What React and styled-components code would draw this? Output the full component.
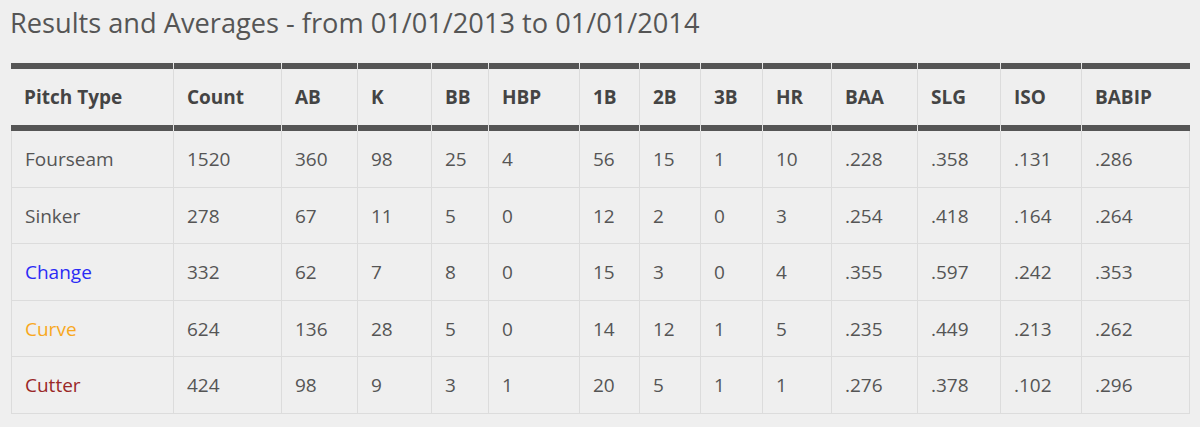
import styled, { createGlobalStyle } from 'styled-components';

const GlobalStyle = createGlobalStyle`
  html, body {
    margin: 0;
    background: #efefef;
  }
  body {
    font-family: "Open Sans", "Liberation Sans", sans-serif;
    color: #555;
  }
`;

const Page = styled.div`
  padding: 6px 10px 14px 11px;
`;

const Title = styled.h2`
  font-size: 27.2px;
  font-weight: 400;
  color: #555;
  margin: 0 0 23px -1px;
  line-height: 34px;
  white-space: nowrap;
`;

const Table = styled.table`
  table-layout: fixed;
  width: 1179px;
  border-collapse: separate;
  border-spacing: 0;
  font-size: 19px;
`;

const HeadCell = styled.th`
  height: 68px;
  padding: 0 0 0 13px;
  text-align: left;
  font-weight: 700;
  font-size: 19px;
  color: #444;
  border-top: 6px solid transparent;
  border-bottom: 6px solid transparent;
  border-left: 1px solid #dcdcdc;
  background:
    linear-gradient(#555, #555) top / 100% 6px no-repeat border-box,
    linear-gradient(#555, #555) bottom / 100% 6px no-repeat border-box,
    #efefef;
  box-sizing: border-box;

  &:first-child {
    border-left: none;
  }
`;

const Cell = styled.td`
  height: 54.5px;
  padding: 1px 0 0 13px;
  color: ${({ $color }) => $color || '#555'};
  border-bottom: 1px solid #dcdcdc;
  border-left: 1px solid #dcdcdc;
  box-sizing: content-box;

  &:last-child {
    border-right: 1px solid #dcdcdc;
  }
`;

const widths = [162, 108, 76, 74, 57, 91, 60, 61, 62, 69, 86, 83, 81, 109];

const headers = ['Pitch Type', 'Count', 'AB', 'K', 'BB', 'HBP', '1B', '2B', '3B', 'HR', 'BAA', 'SLG', 'ISO', 'BABIP'];

const rows = [
  { name: 'Fourseam', values: ['1520', '360', '98', '25', '4', '56', '15', '1', '10', '.228', '.358', '.131', '.286'] },
  { name: 'Sinker', values: ['278', '67', '11', '5', '0', '12', '2', '0', '3', '.254', '.418', '.164', '.264'] },
  { name: 'Change', color: '#2b2bf5', values: ['332', '62', '7', '8', '0', '15', '3', '0', '4', '.355', '.597', '.242', '.353'] },
  { name: 'Curve', color: '#f8a81e', values: ['624', '136', '28', '5', '0', '14', '12', '1', '5', '.235', '.449', '.213', '.262'] },
  { name: 'Cutter', color: '#9a2727', values: ['424', '98', '9', '3', '1', '20', '5', '1', '1', '.276', '.378', '.102', '.296'] },
];

export default function App() {
  return (
    <Page>
      <GlobalStyle />
      <Title>Results and Averages - from 01/01/2013 to 01/01/2014</Title>
      <Table>
        <colgroup>
          {widths.map((w, i) => (
            <col key={i} style={{ width: w }} />
          ))}
        </colgroup>
        <thead>
          <tr>
            {headers.map((h) => (
              <HeadCell key={h}>{h}</HeadCell>
            ))}
          </tr>
        </thead>
        <tbody>
          {rows.map((row) => (
            <tr key={row.name}>
              <Cell $color={row.color}>{row.name}</Cell>
              {row.values.map((v, i) => (
                <Cell key={i}>{v}</Cell>
              ))}
            </tr>
          ))}
        </tbody>
      </Table>
    </Page>
  );
}
